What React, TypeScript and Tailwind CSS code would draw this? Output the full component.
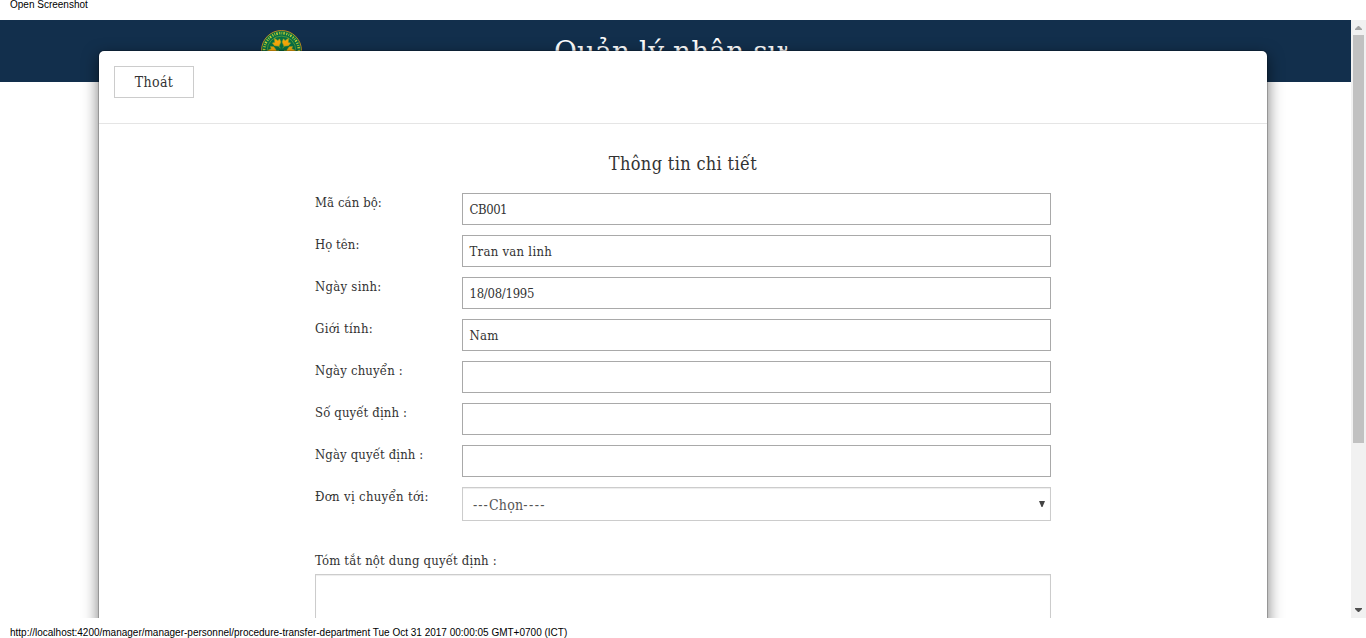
const slab = "font-['Roboto_Slab','DejaVu_Serif_Condensed','DejaVu_Serif',serif]";

type Field = { label: string; value: string; labelTrack: string; valueTrack?: string };

const fields: Field[] = [
  { label: "Mã cán bộ:", value: "CB001", labelTrack: "tracking-[0.1px]", valueTrack: "tracking-[-0.45px]" },
  { label: "Họ tên:", value: "Tran van linh", labelTrack: "tracking-[0.05px]", valueTrack: "tracking-[0.27px]" },
  { label: "Ngày sinh:", value: "18/08/1995", labelTrack: "tracking-[0.27px]", valueTrack: "tracking-[-0.27px]" },
  { label: "Giới tính:", value: "Nam", labelTrack: "tracking-[0.3px]", valueTrack: "tracking-[0.25px]" },
  { label: "Ngày chuyển :", value: "", labelTrack: "tracking-[0.18px]" },
  { label: "Số quyết định :", value: "", labelTrack: "tracking-[0.13px]" },
  { label: "Ngày quyết định :", value: "", labelTrack: "tracking-[0.13px]" },
];

function Emblem() {
  return (
    <svg className="mt-[10px] ml-[261px] h-[41px] w-[41px] shrink-0" viewBox="0 0 41 41">
      <circle cx="20.5" cy="20.5" r="20" fill="#087044" stroke="#b88a20" strokeWidth="1" />
      <circle cx="20.5" cy="20.5" r="17.4" fill="none" stroke="#c3d032" strokeWidth="2.6" strokeDasharray="1 1.3 .7 1.2 1.4 1.6" />
      <circle cx="20.5" cy="20.5" r="14.4" fill="none" stroke="#6ea436" strokeWidth=".7" />
      {[-90, -30, 30, 90].map((angle) => (
        <g key={angle} transform={`rotate(${angle} 20.5 20.5)`}>
          <path d="M20.5 15.5 L16.8 12.8 L16.4 9.4 L18.7 10.2 L20.5 6.4 L22.3 10.2 L24.6 9.4 L24.2 12.8 Z" fill="#f8a80a" stroke="#9fae22" strokeWidth=".5" />
          <path d="M20.5 15.5 V18" stroke="#8cad22" strokeWidth=".7" />
        </g>
      ))}
    </svg>
  );
}

function Modal() {
  return (
    <section className="absolute top-[30px] left-[98px] h-[700px] w-[1170px] rounded-md border border-black/20 bg-white bg-clip-padding text-[#333] shadow-[0_5px_15px_rgba(0,0,0,0.5)]">
      <div className="h-[73px] border-b border-[#e5e5e5] p-[15px]">
        <button className="flex h-8 w-20 items-center justify-center border border-[#ccc] text-[14px] tracking-[0.35px]">Thoát</button>
      </div>
      <div className="mx-auto w-[736px]">
        <h2 className="flex h-[69px] items-center justify-center pt-[10px] text-[18px] tracking-[0.34px] whitespace-nowrap">Thông tin chi tiết</h2>
        <div className="flex flex-col gap-[10px] text-[13px]">
          {fields.map((field) => (
            <div key={field.label} className="flex h-8">
              <label className={`w-[147px] shrink-0 leading-[20px] whitespace-nowrap ${field.labelTrack}`}>{field.label}</label>
              <div className={`flex w-[589px] items-center border border-[#a9a9a9] pt-[2px] pl-[6.5px] ${field.valueTrack ?? ""}`}>{field.value}</div>
            </div>
          ))}
          <div className="flex h-[34px]">
            <label className="w-[147px] shrink-0 leading-[20px] tracking-[0.32px] whitespace-nowrap">Đơn vị chuyển tới:</label>
            <div className="flex w-[589px] items-center justify-between border border-[#ccc] pr-[5px] pl-[10px] text-[14px] text-[#555] shadow-[inset_0_1px_1px_rgba(0,0,0,0.075)]">
              <span className="pt-[2px]"><span className="tracking-[1.05px]">---</span><span className="tracking-[0.25px]">Chọn</span><span className="tracking-[1.4px]">----</span></span>
              <svg className="h-[6px] w-[6px]" viewBox="0 0 6 6"><path d="M0 0H6L3.5 6H2.5Z" fill="#444" /></svg>
            </div>
          </div>
        </div>
        <label className="mt-[30px] block h-[23px] text-[13px] leading-[20px] tracking-[0.18px]">Tóm tắt nột dung quyết định :</label>
        <div className="h-[100px] border border-[#ccc] shadow-[inset_0_1px_1px_rgba(0,0,0,0.075)]" />
      </div>
    </section>
  );
}

export default function App() {
  return (
    <main className="flex h-[638px] w-[1366px] flex-col overflow-hidden bg-white font-['Liberation_Sans',sans-serif] text-[10px] text-black">
      <div className="h-5 pl-[10px] leading-[10px]">Open Screenshot</div>
      <div className="flex h-[598px]">
        <div className={`relative w-[1351px] overflow-hidden ${slab}`}>
          <header className="flex h-[62px] bg-[#122f4c]">
            <Emblem />
            <h1 className="mt-[12px] ml-[252px] font-['Roboto_Slab','DejaVu_Serif',serif] text-[28px] leading-[40px] tracking-[0.1px] whitespace-nowrap text-white">Quản lý nhân sự</h1>
          </header>
          <Modal />
        </div>
        <div className="flex w-[15px] flex-col items-center bg-[#f1f1f1]">
          <svg className="h-[15px] w-[15px]" viewBox="0 0 15 15"><path d="M7 6H8L11 9V10H4V9Z" fill="#a3a3a3" /></svg>
          <div className="h-[408px] w-[11px] bg-[#c1c1c1]" />
          <svg className="mt-auto h-[15px] w-[15px]" viewBox="0 0 15 15"><path d="M4 5H11V6L8 9H7L4 6Z" fill="#505050" /></svg>
        </div>
      </div>
      <div className="h-5 pl-[10px] leading-[29px] whitespace-nowrap">http://localhost:4200/manager/manager-personnel/procedure-transfer-department Tue Oct 31 2017 00:00:05 GMT+0700 (ICT)</div>
    </main>
  );
}
